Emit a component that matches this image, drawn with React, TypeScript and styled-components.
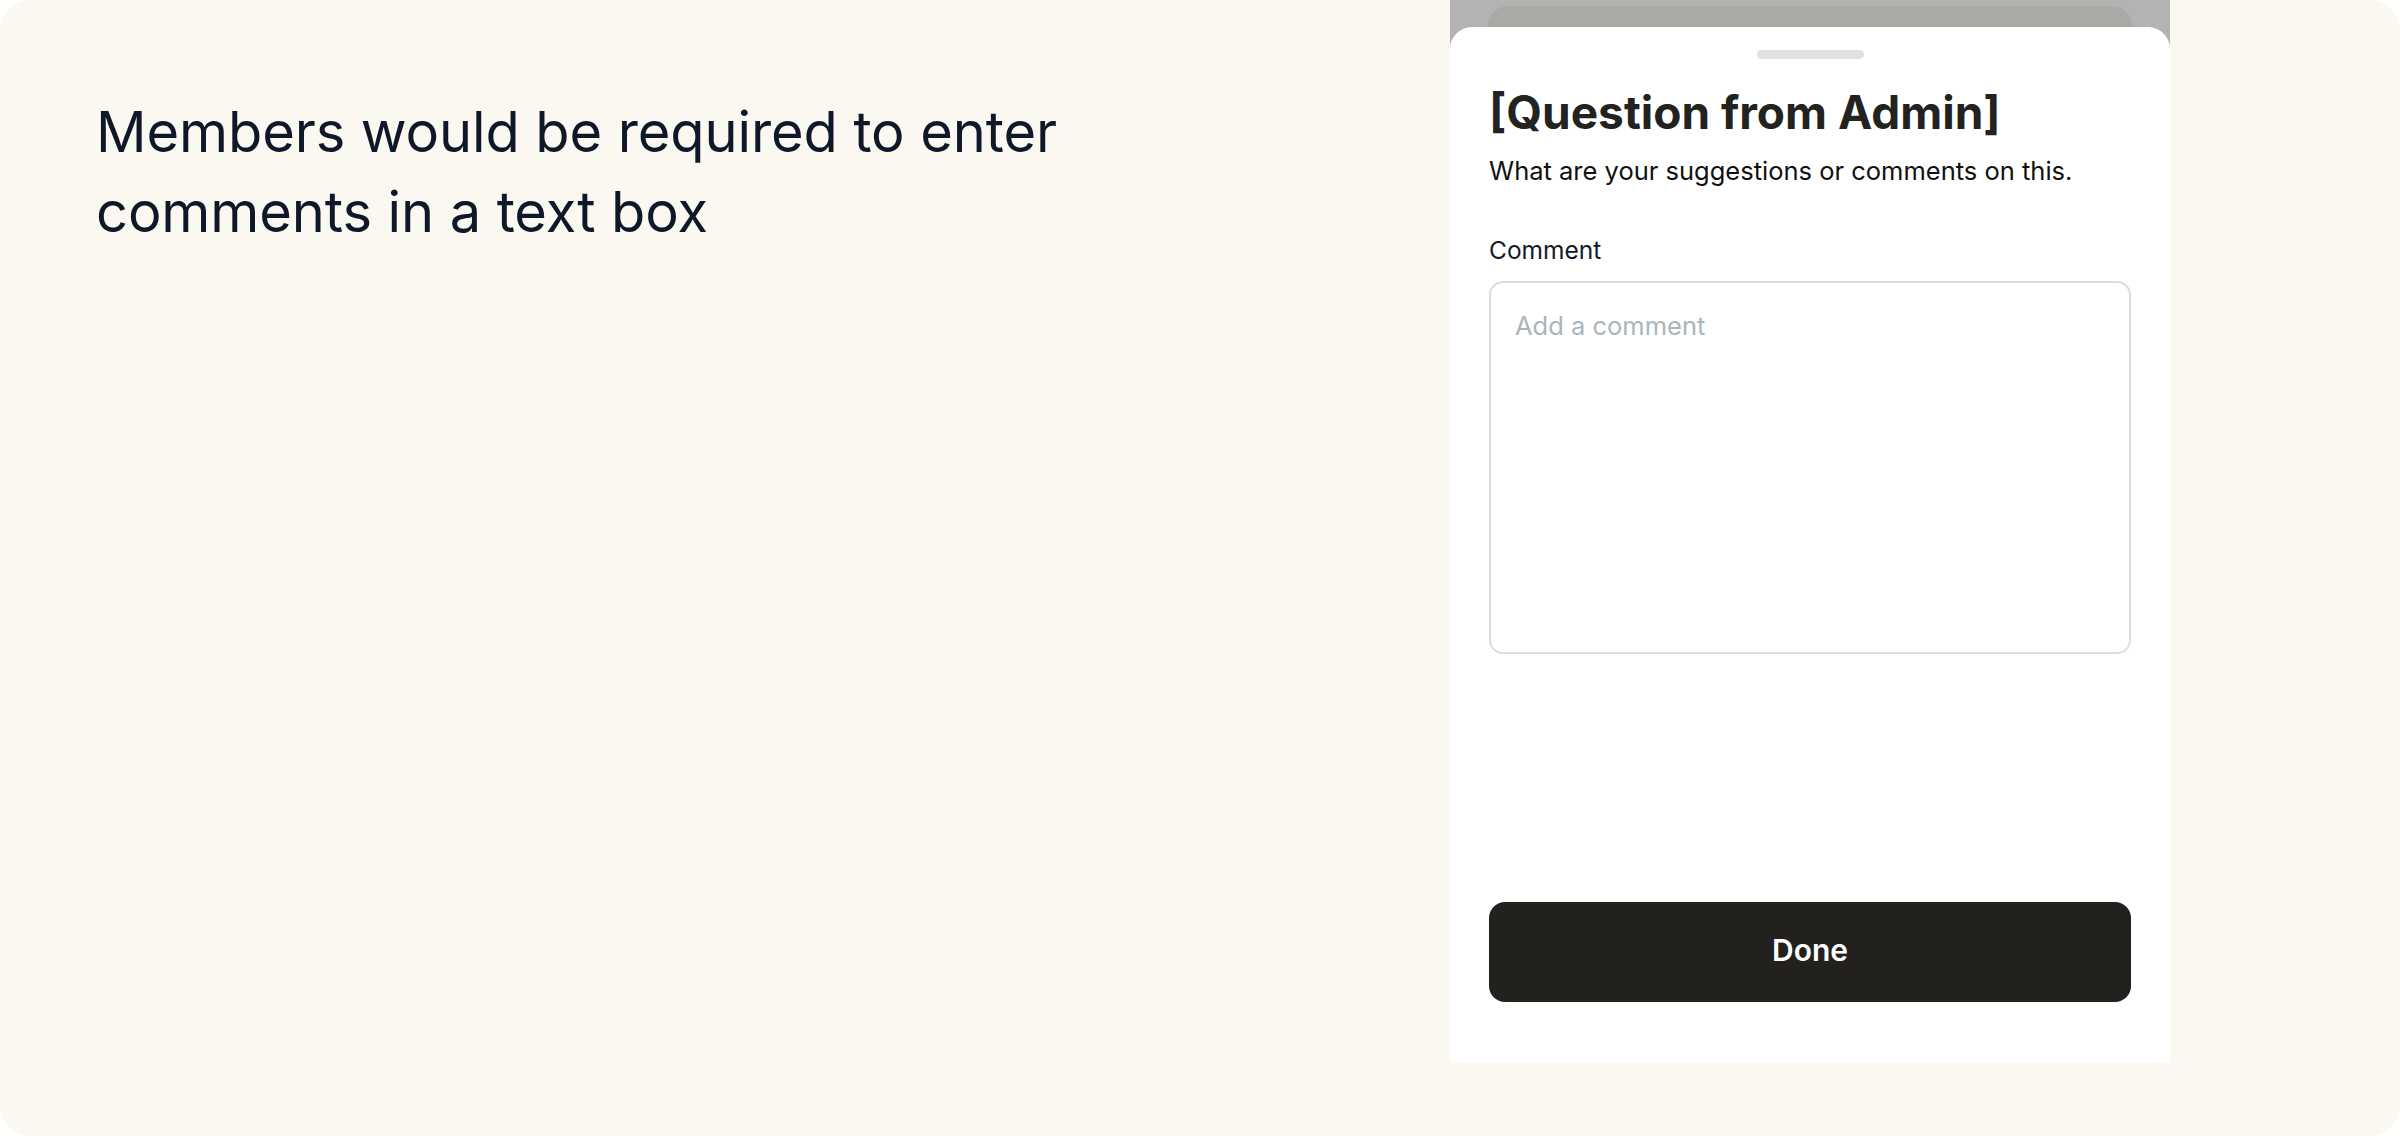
import React from "react";
import styled, { createGlobalStyle } from "styled-components";

const GlobalStyle = createGlobalStyle`
  html, body {
    margin: 0;
    padding: 0;
    background: #ffffff;
  }
  * {
    box-sizing: border-box;
  }
`;

const Page = styled.div`
  width: 2400px;
  height: 1136px;
  background: #fbf8f1;
  border-radius: 30px;
  display: flex;
  overflow: hidden;
  font-family: Inter, "Liberation Sans", sans-serif;
`;

const IntroColumn = styled.section`
  flex: 1;
  padding: 92px 0 0 96px;
`;

const IntroHeading = styled.h1`
  margin: 0;
  width: 1100px;
  font-size: 56px;
  line-height: 80px;
  font-weight: 400;
  color: #0e1828;
  letter-spacing: -0.1px;
`;

const PhoneFrame = styled.div`
  width: 720px;
  height: 1063px;
  margin-right: 230px;
  background: #b3b3b3;
  display: flex;
  flex-direction: column;
`;

const BackCard = styled.div`
  height: 21px;
  margin: 6px 38px 0;
  border-radius: 20px 20px 0 0;
  background: #aaa9a6;
`;

const Sheet = styled.div`
  flex: 1;
  background: #ffffff;
  border-radius: 22px 22px 0 0;
  padding: 23px 39px 61px;
  display: flex;
  flex-direction: column;
`;

const Handle = styled.div`
  align-self: center;
  width: 107px;
  height: 9px;
  border-radius: 5px;
  background: #e1e1e1;
`;

const Title = styled.h2`
  margin: 26px 0 0;
  font-size: 46px;
  line-height: 54px;
  font-weight: 700;
  color: #22221f;
  letter-spacing: 0px;
`;

const Subtitle = styled.p`
  margin: 15px 0 0;
  font-size: 25.5px;
  line-height: 34px;
  font-weight: 400;
  color: #111111;
`;

const FieldLabel = styled.label`
  display: block;
  margin: 47px 0 0;
  font-size: 24.5px;
  line-height: 30px;
  color: #121a28;
`;

const CommentBox = styled.textarea`
  display: block;
  margin: 16px 0 0;
  width: 100%;
  height: 373px;
  border: 2px solid #dadee2;
  border-radius: 14px;
  padding: 27px 24px;
  font-family: Inter, "Liberation Sans", sans-serif;
  font-size: 25.5px;
  line-height: 32px;
  color: #111111;
  background: #ffffff;
  resize: none;
  outline: none;

  &::placeholder {
    color: #a9b5bc;
  }
`;

const DoneButton = styled.button`
  margin-top: auto;
  width: 100%;
  height: 100px;
  border: none;
  border-radius: 16px;
  background: #22211e;
  color: #ffffff;
  font-family: Inter, "Liberation Sans", sans-serif;
  font-size: 30px;
  line-height: 36px;
  font-weight: 600;
  padding: 0 0 4px;
  cursor: pointer;
`;

export default function App() {
  return (
    <>
      <GlobalStyle />
      <Page>
        <IntroColumn>
          <IntroHeading>
            Members would be required to enter
            <br />
            comments in a text box
          </IntroHeading>
        </IntroColumn>
        <PhoneFrame>
          <BackCard />
          <Sheet>
            <Handle />
            <Title>[Question from Admin]</Title>
            <Subtitle>What are your suggestions or comments on this.</Subtitle>
            <FieldLabel htmlFor="comment">Comment</FieldLabel>
            <CommentBox id="comment" placeholder="Add a comment" />
            <DoneButton>Done</DoneButton>
          </Sheet>
        </PhoneFrame>
      </Page>
    </>
  );
}
